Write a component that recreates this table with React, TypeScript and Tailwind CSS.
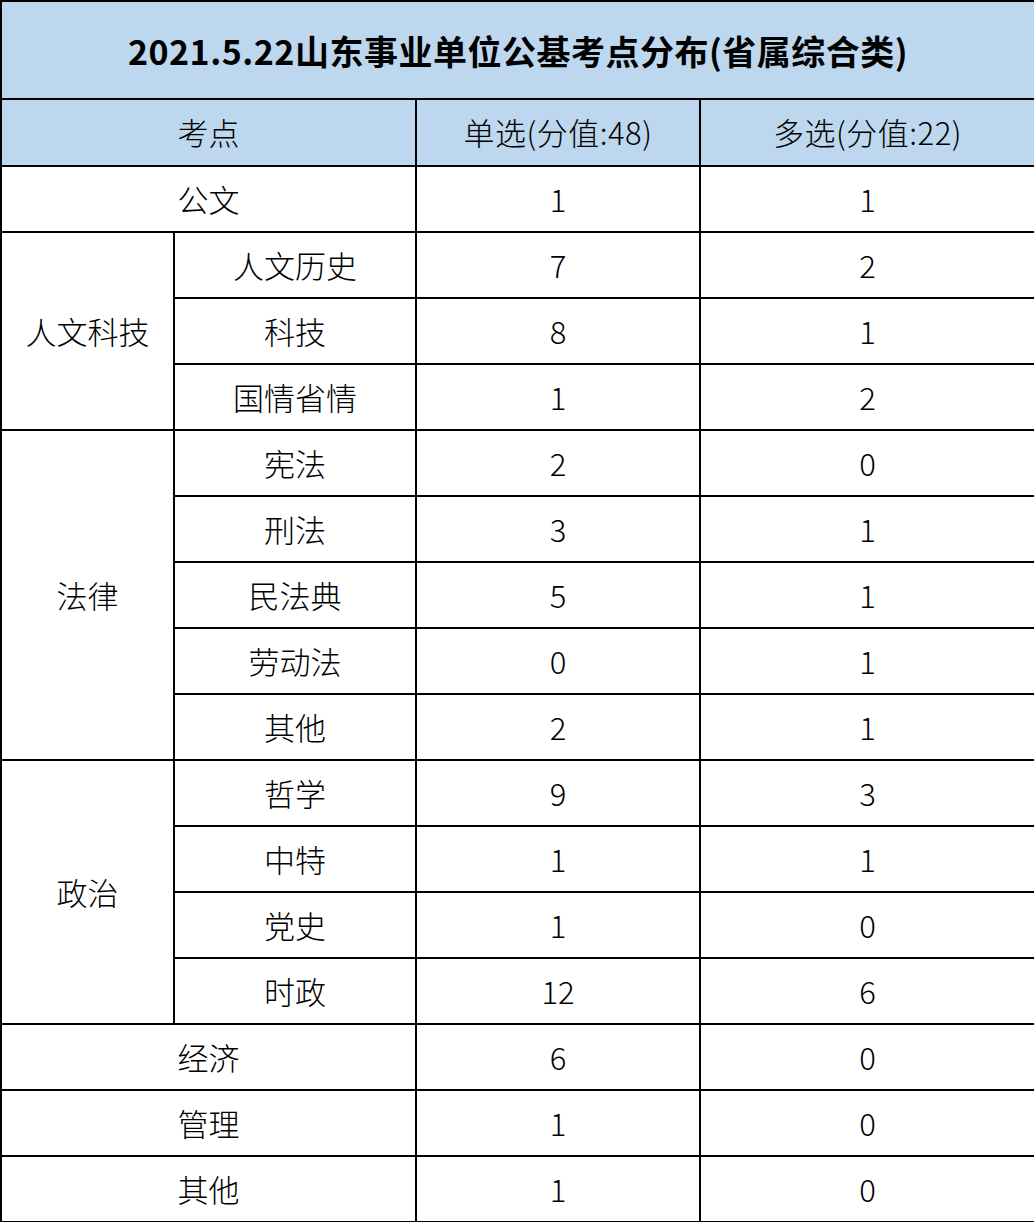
type Row = {
  group?: { label: string; span: number }
  topic: string
  single: number
  multi: number
  full?: boolean
}

const ROWS: Row[] = [
  { topic: '公文', single: 1, multi: 1, full: true },
  { group: { label: '人文科技', span: 3 }, topic: '人文历史', single: 7, multi: 2 },
  { topic: '科技', single: 8, multi: 1 },
  { topic: '国情省情', single: 1, multi: 2 },
  { group: { label: '法律', span: 5 }, topic: '宪法', single: 2, multi: 0 },
  { topic: '刑法', single: 3, multi: 1 },
  { topic: '民法典', single: 5, multi: 1 },
  { topic: '劳动法', single: 0, multi: 1 },
  { topic: '其他', single: 2, multi: 1 },
  { group: { label: '政治', span: 4 }, topic: '哲学', single: 9, multi: 3 },
  { topic: '中特', single: 1, multi: 1 },
  { topic: '党史', single: 1, multi: 0 },
  { topic: '时政', single: 12, multi: 6 },
  { topic: '经济', single: 6, multi: 0, full: true },
  { topic: '管理', single: 1, multi: 0, full: true },
  { topic: '其他', single: 1, multi: 0, full: true },
]

const cell = 'border-2 border-black text-center align-middle p-0'

export default function App() {
  return (
    <div className="w-[1034px] h-[1222px] bg-white text-black [font-family:'Noto_Sans_CJK_SC',sans-serif]">
      <table className="w-[1034px] border-collapse table-fixed">
        <colgroup>
          <col className="w-[173px]" />
          <col className="w-[242px]" />
          <col className="w-[284px]" />
          <col className="w-[335px]" />
        </colgroup>
        <thead>
          <tr className="h-[98px] bg-[#bdd7ee]">
            <th colSpan={4} className={`${cell} text-[34px] font-bold tracking-[0.5px]`}>
              2021.5.22山东事业单位公基考点分布(省属综合类)
            </th>
          </tr>
          <tr className="h-[67px] bg-[#bdd7ee] text-[31px]">
            <th colSpan={2} className={`${cell} font-light`}>考点</th>
            <th className={`${cell} font-light tracking-[0.5px]`}>单选(分值:48)</th>
            <th className={`${cell} font-light tracking-[0.5px]`}>多选(分值:22)</th>
          </tr>
        </thead>
        <tbody className="text-[31px] font-light">
          {ROWS.map((r, i) => (
            <tr key={i} className="h-[66px]">
              {r.full ? (
                <td colSpan={2} className={cell}>{r.topic}</td>
              ) : (
                <>
                  {r.group ? (
                    <td rowSpan={r.group.span} className={cell}>{r.group.label}</td>
                  ) : null}
                  <td className={cell}>{r.topic}</td>
                </>
              )}
              <td className={cell}>{r.single}</td>
              <td className={cell}>{r.multi}</td>
            </tr>
          ))}
        </tbody>
      </table>
    </div>
  )
}
